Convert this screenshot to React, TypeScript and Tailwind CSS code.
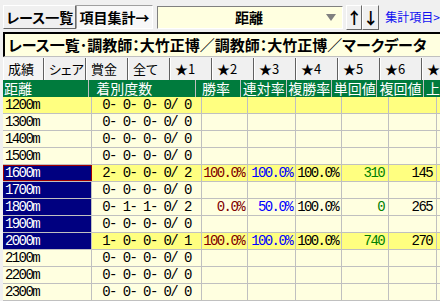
import React from 'react';

// 距離別集計の画面。行データは固定。

interface DistRow {
  dist: string;
  rec: string;
  win?: string;
  ren?: string;
  fuku?: string;
  tan?: string;
  fukuVal?: string;
  hl?: boolean; // 黄色の行
  sel?: boolean; // 距離セルが選択中
  focus?: boolean;
}

const ROWS: DistRow[] = [
  { dist: '1200m', rec: '0- 0- 0- 0/ 0', hl: true },
  { dist: '1300m', rec: '0- 0- 0- 0/ 0' },
  { dist: '1400m', rec: '0- 0- 0- 0/ 0' },
  { dist: '1500m', rec: '0- 0- 0- 0/ 0' },
  { dist: '1600m', rec: '2- 0- 0- 0/ 2', win: '100.0%', ren: '100.0%', fuku: '100.0%', tan: '310', fukuVal: '145', hl: true, sel: true, focus: true },
  { dist: '1700m', rec: '0- 0- 0- 0/ 0', sel: true },
  { dist: '1800m', rec: '0- 1- 1- 0/ 2', win: '0.0%', ren: '50.0%', fuku: '100.0%', tan: '0', fukuVal: '265', sel: true },
  { dist: '1900m', rec: '0- 0- 0- 0/ 0', sel: true },
  { dist: '2000m', rec: '1- 0- 0- 0/ 1', win: '100.0%', ren: '100.0%', fuku: '100.0%', tan: '740', fukuVal: '270', hl: true, sel: true },
  { dist: '2100m', rec: '0- 0- 0- 0/ 0' },
  { dist: '2200m', rec: '0- 0- 0- 0/ 0' },
  { dist: '2300m', rec: '0- 0- 0- 0/ 0' },
];

const TABS = ['成績', 'シェア', '賞金', '全て', '★1', '★2', '★3', '★4', '★5', '★6', '★'];

const JP = "font-['Noto_Sans_CJK_JP',sans-serif] [font-feature-settings:'palt']";
const MONO = "font-['Liberation_Mono',monospace] text-[14px] tracking-[-1.6px]";
const RAISED = 'border border-t-white border-l-white border-r-[#696969] border-b-[#696969] bg-[#f0f0f0]';

export default function App() {
  return (
    <div className={`w-[440px] h-[301px] overflow-hidden bg-[#f0f0f0] ${JP}`}>
      {/* ツールバー */}
      <div className="flex items-center h-[32px] pl-[3px] pt-[2px]">
        <div className={`${RAISED} w-[74px] h-[24px] flex items-center justify-center text-[14px] font-bold`}>レース一覧</div>
        <div className="w-[77px] h-[24px] flex items-center justify-center text-[14px] font-bold border border-t-[#a0a0a0] border-l-[#a0a0a0] border-r-white border-b-white bg-[#f8f8f8]">
          項目集計→
        </div>
        <div className="ml-[4px] w-[188px] h-[23px] flex items-center border border-t-[#808080] border-l-[#808080] border-r-white border-b-white bg-[#ffffe0]">
          <div className="flex-1 text-center text-[14px] font-bold pl-[14px]">距離</div>
          <svg width="10" height="7" className="mr-[6px]">
            <polygon points="0,0 10,0 5,7" fill="#808080" />
          </svg>
        </div>
        <div className={`${RAISED} ml-[3px] w-[16px] h-[25px] flex items-center justify-center text-[16px] font-bold`}>↑</div>
        <div className={`${RAISED} w-[17px] h-[25px] flex items-center justify-center text-[16px] font-bold`}>↓</div>
        <div className="ml-[6px] text-[12px] text-[#1010f0] whitespace-nowrap">集計項目&gt;</div>
      </div>

      {/* タイトル */}
      <div className="ml-[3px] h-[25px] flex items-center border-t-2 border-l-2 border-black border-b border-b-[#c0c0c0] bg-[#ffffe0] pl-[3px] text-[15px] font-bold whitespace-nowrap overflow-hidden">
        レース一覧･調教師：大竹正博／調教師：大竹正博／マークデータ
      </div>

      {/* タブ */}
      <div className="flex h-[22px] mt-[1px] pl-[3px] text-[13px] whitespace-nowrap">
        {TABS.map((t, i) => (
          <div
            key={t}
            className={`shrink-0 h-full flex items-center pl-[4px] border-r border-r-[#606060] border-l border-l-white ${i === 0 ? 'w-[41px] bg-[#f4f4f4]' : 'w-[42px] bg-[#f0f0f0]'}`}
          >
            {t}
          </div>
        ))}
      </div>

      {/* 表 */}
      <div className="ml-[3px]">
        <div className="flex h-[17px] bg-[#007b3d] text-white text-[14px] leading-[17px] whitespace-nowrap">
          <div className="w-[89px] pl-[1px] border-r border-r-[#c0c0c0]">距離</div>
          <div className="w-[110px] pl-[7px] border-r border-r-[#c0c0c0]">着別度数</div>
          <div className="w-[46px] pl-[6px] border-r border-r-[#c0c0c0]">勝率</div>
          <div className="w-[48px] pl-[2px] border-r border-r-[#c0c0c0]">連対率</div>
          <div className="w-[46px] pl-[1px] border-r border-r-[#c0c0c0]">複勝率</div>
          <div className="w-[47px] pl-[2px] border-r border-r-[#c0c0c0]">単回値</div>
          <div className="w-[48px] pl-[2px] border-r border-r-[#c0c0c0]">複回値</div>
          <div className="flex-1 pl-[2px]">上</div>
        </div>
        {ROWS.map(r => {
          const bg = r.hl ? 'bg-[#ffff80]' : 'bg-[#ffffe0]';
          return (
            <div key={r.dist} className={`flex h-[17px] border-b border-b-[#c0c0c0] ${bg} ${MONO} leading-[16px] whitespace-nowrap`}>
              <div
                className={`w-[89px] pl-[2px] border-r ${r.sel ? 'bg-[#000080] text-white border-r-[#c0c0c0]' : 'border-r-[#c0c0c0]'} ${r.focus ? 'outline outline-1 -outline-offset-1 outline-[#a00000]' : ''}`}
              >
                {r.dist}
              </div>
              <div className="w-[110px] text-center border-r border-r-[#c0c0c0]">{r.rec}</div>
              <div className="w-[46px] text-right pr-[3px] border-r border-r-[#c0c0c0] text-[#800000]">{r.win}</div>
              <div className="w-[48px] text-right pr-[3px] border-r border-r-[#c0c0c0] text-[#0000ff]">{r.ren}</div>
              <div className="w-[46px] text-right pr-[3px] border-r border-r-[#c0c0c0]">{r.fuku}</div>
              <div className="w-[47px] text-right pr-[4px] border-r border-r-[#c0c0c0] text-[#008000]">{r.tan}</div>
              <div className="w-[48px] text-right pr-[4px] border-r border-r-[#c0c0c0]">{r.fukuVal}</div>
              <div className="flex-1" />
            </div>
          );
        })}
      </div>
    </div>
  );
}
